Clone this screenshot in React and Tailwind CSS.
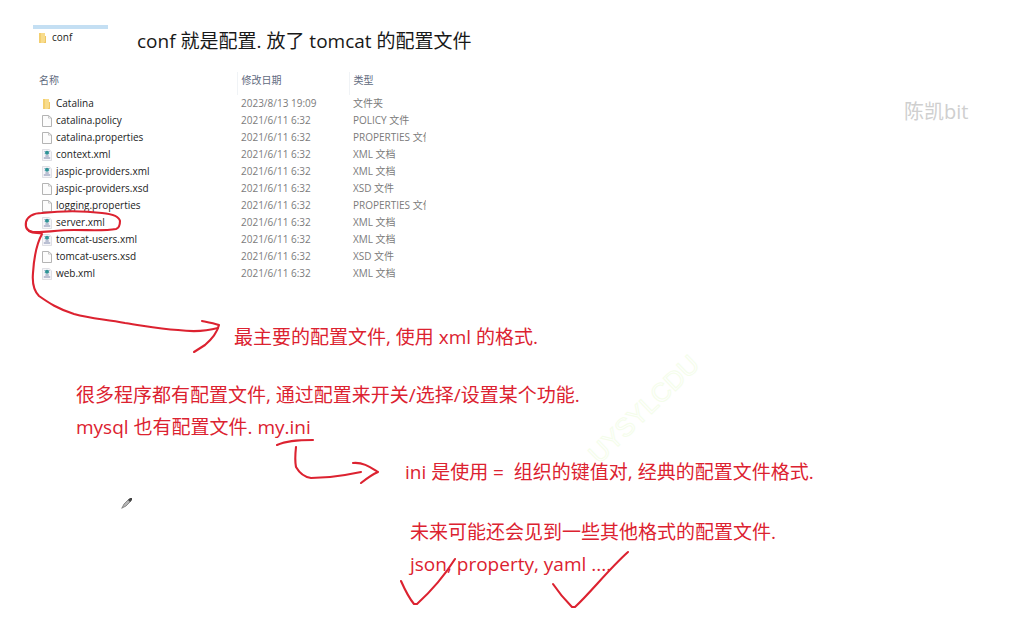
import React from "react";

const files = [
  ["folder", "Catalina", "2023/8/13 19:09", "文件夹"],
  ["page", "catalina.policy", "2021/6/11 6:32", "POLICY 文件"],
  ["page", "catalina.properties", "2021/6/11 6:32", "PROPERTIES 文件"],
  ["xml", "context.xml", "2021/6/11 6:32", "XML 文档"],
  ["xml", "jaspic-providers.xml", "2021/6/11 6:32", "XML 文档"],
  ["page", "jaspic-providers.xsd", "2021/6/11 6:32", "XSD 文件"],
  ["page", "logging.properties", "2021/6/11 6:32", "PROPERTIES 文件"],
  ["xml", "server.xml", "2021/6/11 6:32", "XML 文档"],
  ["xml", "tomcat-users.xml", "2021/6/11 6:32", "XML 文档"],
  ["page", "tomcat-users.xsd", "2021/6/11 6:32", "XSD 文件"],
  ["xml", "web.xml", "2021/6/11 6:32", "XML 文档"],
];

function FolderIcon() {
  return (
    <svg className="shrink-0" width="10" height="12" viewBox="0 0 10 12" aria-hidden="true">
      <path d="M1 1h6v9l1 1H1z" fill="#f8dc8c" />
      <path d="M1 1h2v10H1z" fill="#f3cf70" />
      <path d="M7 4h1v7H5.5L7 9.6z" fill="#efc765" />
    </svg>
  );
}

function PageIcon() {
  return (
    <svg className="shrink-0" width="10" height="12" viewBox="0 0 10 12" aria-hidden="true">
      <path d="M.5.5h6l3 2.6v8.4h-9z" fill="#fcfcfc" stroke="#acacac" strokeWidth=".9" />
      <path d="M6.5.5v2.6h3" fill="none" stroke="#b5b5b5" strokeWidth=".7" />
    </svg>
  );
}

function XmlIcon() {
  return (
    <svg className="shrink-0" width="10" height="12" viewBox="0 0 10 12" aria-hidden="true">
      <path d="M.5.5h6.6l2.4 2.3v8.7h-9z" fill="#f5f5f9" stroke="#d2d2da" strokeWidth=".7" />
      <path d="M2 2.6h6M2.4 4.6h5" stroke="#9db4cc" strokeWidth=".8" />
      <circle cx="5" cy="3.8" r="2" fill="#2f9496" />
      <path d="M3.4 7h3.4M1.8 9h6.4" stroke="#7f89ab" strokeWidth="1" />
    </svg>
  );
}

const icons = { folder: FolderIcon, page: PageIcon, xml: XmlIcon };

function FileTable() {
  return (
    <table className="ml-[37px] mt-[15px] w-[389px] table-fixed border-collapse text-left text-[10px] leading-[17px] whitespace-nowrap">
      <colgroup>
        <col className="w-[200px]" />
        <col className="w-[112px]" />
        <col className="w-[77px]" />
      </colgroup>
      <thead className="text-[#5f6b80]">
        <tr>
          <th className="h-[23px] p-0 pl-[2px] pb-[6px] font-normal">名称</th>
          <th className="h-[23px] border-l border-[#f0f3f6] p-0 pb-[6px] pl-1 font-normal">修改日期</th>
          <th className="h-[23px] border-l border-[#f0f3f6] p-0 pb-[6px] pl-1 font-normal">类型</th>
        </tr>
      </thead>
      <tbody className="text-[#7b7b7b]">
        {files.map(([kind, name, date, type]) => {
          const Icon = icons[kind];
          return (
            <tr key={name}>
              <td className="p-0 pl-[5px] text-[#222]">
                <div className="flex items-center gap-1">
                  <Icon />
                  <span>{name}</span>
                </div>
              </td>
              <td className="p-0 pl-1">{date}</td>
              <td className="overflow-hidden p-0 pl-1">{type}</td>
            </tr>
          );
        })}
      </tbody>
    </table>
  );
}

function Ink() {
  return (
    <svg
      className="pointer-events-none absolute left-0 top-0"
      width="1015"
      height="620"
      viewBox="0 0 1015 620"
      fill="none"
      stroke="#dc2230"
      strokeWidth="2.1"
      strokeLinecap="round"
      strokeLinejoin="round"
      aria-hidden="true"
    >
      <path d="M42 213C33 213 27 217 26 222C25 228 27 231 33 232C43 233 55 230 74 230C92 230 105 231 116 229C119 228 120 225 120 221C119 216 112 214 102 213C85 211 60 211 42 213" />
      <path d="M29 231C34 234 39 232 42 234C37 243 34 257 33 273C32 284 34 291 39 296C49 303 58 309 74 314C92 319 105 319 125 323C146 326 157 329 178 330C193 332 207 331 218 328" />
      <path d="M202 321C207 322 213 323 219 325C217 333 212 339 205 345L194 352" />
      <path d="M277 445C286 441 295 440 313 440" />
      <path d="M296 447C295 456 295 462 296 467C300 474 304 477 311 478C323 478 334 477 345 475L361 472" />
      <path d="M353 463C363 462 370 467 378 472C371 475 366 479 361 483" />
      <path d="M401 581C405 590 409 598 414 604H417C428 594 443 578 455 559" />
      <path d="M553 584C559 593 566 601 572 607H575C591 592 609 569 628 552" />
      <g stroke="none">
        <path d="M122 508l2-4 5-5 2 2-5 5z" fill="#b5b5b5" />
        <path d="M122 508l2-4 5-5M122 508l4-2 5-5" stroke="#777" strokeWidth=".8" />
        <path d="M128 500l2-2h2v2l-2 2z" fill="#444" />
      </g>
    </svg>
  );
}

export default function App() {
  return (
    <main
      className="relative overflow-hidden bg-white pb-10 text-[19px] leading-8 text-[#dc2230] [font-family:'Open_Sans','Noto_Sans_CJK_SC',sans-serif]"
      lang="zh-CN"
    >
      <header className="flex items-start pl-[33px] pt-[25px]">
        <div className="flex w-[75px] items-center gap-1 border-t-4 border-[#c4dff3] pl-[5px] text-[10px] leading-[17px] text-[#222]">
          <FolderIcon />
          <span>conf</span>
        </div>
        <h1 className="ml-[29px] text-[#181818]">conf 就是配置. 放了 tomcat 的配置文件</h1>
      </header>

      <FileTable />

      <p className="ml-[234px] mt-[39px]">最主要的配置文件, 使用 xml 的格式.</p>
      <section className="ml-[76px] mt-[26px]">
        <p>很多程序都有配置文件, 通过配置来开关/选择/设置某个功能.</p>
        <p>mysql 也有配置文件. my.ini</p>
      </section>
      <p className="ml-[405px] mt-[13px] whitespace-pre">ini 是使用 =  组织的键值对, 经典的配置文件格式.</p>
      <section className="ml-[410px] mt-[28px]">
        <p>未来可能还会见到一些其他格式的配置文件.</p>
        <p>json, property, yaml ....</p>
      </section>

      <span className="absolute left-[904px] top-[96px] text-[20px] text-[#cfcfcf]">陈凯bit</span>
      <span className="pointer-events-none absolute left-[573px] top-[393px] -rotate-44 font-['Liberation_Sans'] text-[26px] text-transparent [-webkit-text-stroke:1px_#f4fdea]">
        UYSYLCDU
      </span>
      <Ink />
    </main>
  );
}
